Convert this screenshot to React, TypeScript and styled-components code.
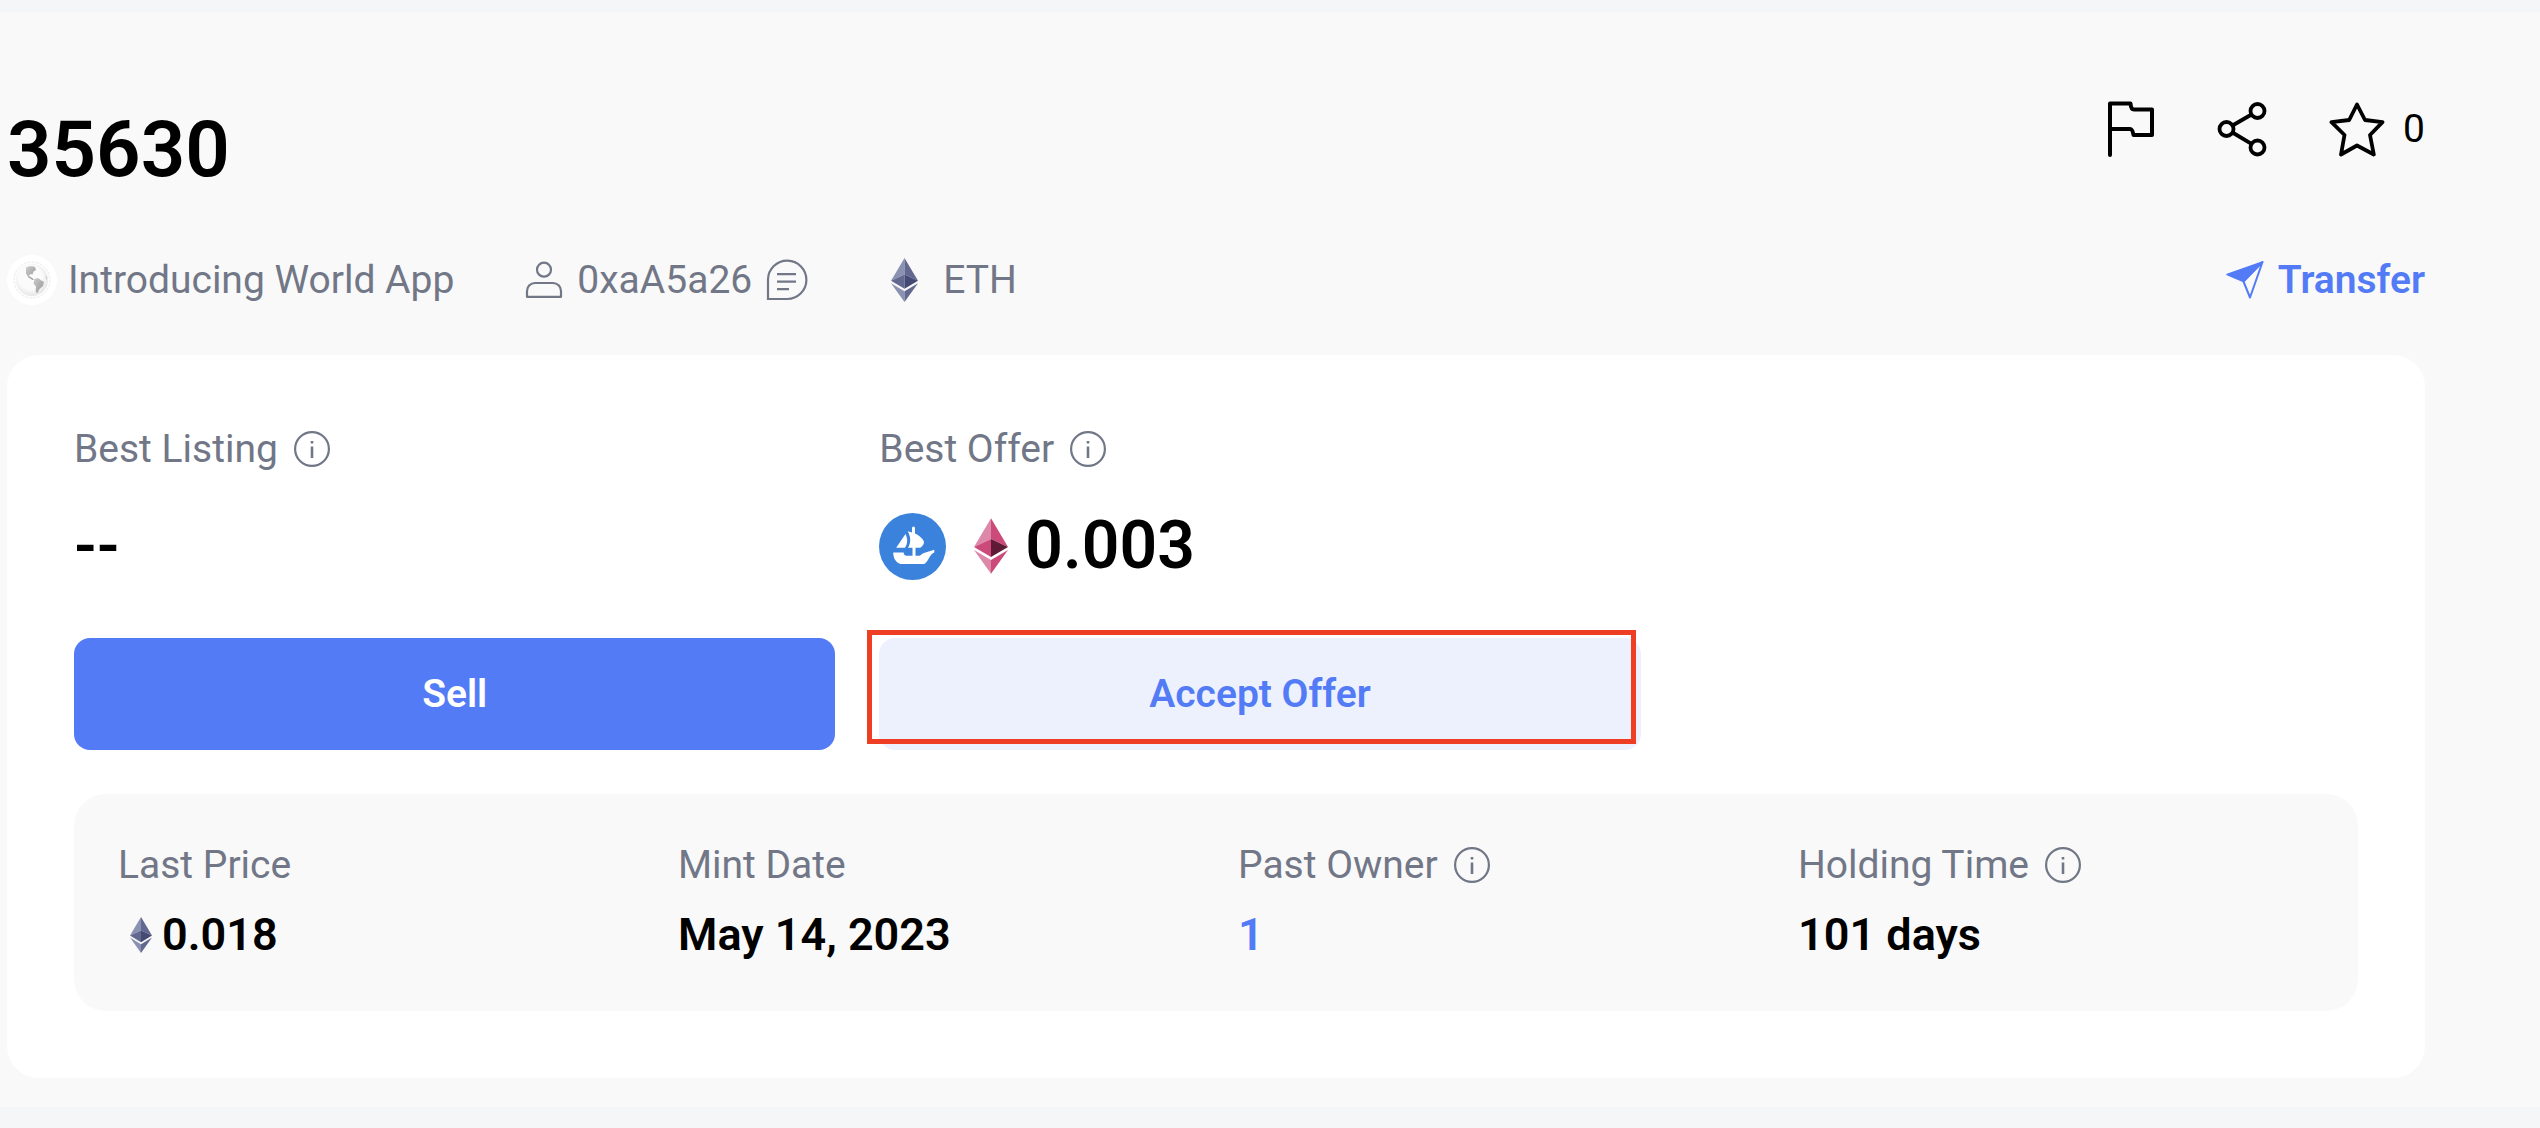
import React from "react";
import styled, { createGlobalStyle } from "styled-components";

const color = {
  ink: "#000000",
  muted: "#717787",
  brand: "#537bf6",
  brandSoft: "#edf1fe",
  surface: "#ffffff",
  page: "#f9f9f9",
  backdrop: "#f4f6f8",
  highlight: "#ee3f24",
};

const GlobalStyle = createGlobalStyle`
  *, *::before, *::after { box-sizing: border-box; }
  body {
    margin: 0;
    background: ${color.backdrop};
    color: ${color.ink};
    font-family: Roboto, "Liberation Sans", sans-serif;
    font-size: 39px;
    line-height: 48px;
  }
  button { font: inherit; color: inherit; background: none; border: 0; padding: 0; cursor: pointer; }
  a { color: inherit; text-decoration: none; }
  svg { display: block; flex: none; }
`;

const Page = styled.main`
  margin-top: 12px;
  padding: 89px 115px 29px 7px;
  background: ${color.page};
`;

const TitleRow = styled.header`
  display: flex;
  justify-content: space-between;
  align-items: flex-start;
`;

const Title = styled.h1`
  margin: 0;
  font-size: 78px;
  line-height: 98px;
  font-weight: 600;
`;

const Actions = styled.div`
  display: flex;
  gap: 62px;
`;

const ActionButton = styled.button`
  display: flex;
  align-items: center;
  gap: 18px;
  height: 56px;
`;

const MetaRow = styled.div`
  display: flex;
  align-items: center;
  margin: 56px 0 50px;
  height: 50px;
  color: ${color.muted};
`;

const MetaItem = styled.a<{ $gap: number }>`
  display: flex;
  align-items: center;
  gap: ${(p) => p.$gap}px;
  margin-right: 71px;
`;

const TransferButton = styled.button`
  display: flex;
  align-items: center;
  gap: 14px;
  margin-left: auto;
  color: ${color.brand};
  font-weight: 600;
`;

const Card = styled.section`
  padding: 70px 67px 67px;
  border-radius: 32px;
  background: ${color.surface};
`;

const Trades = styled.div`
  display: grid;
  grid-template-columns: repeat(2, calc(100% / 3));
  column-gap: 44px;
`;

const Label = styled.div`
  display: flex;
  align-items: center;
  gap: 16px;
  color: ${color.muted};
`;

const TradeValue = styled.div<{ $empty?: boolean }>`
  display: flex;
  align-items: center;
  height: 68px;
  margin: 39px 0 58px;
  font-size: ${(p) => (p.$empty ? 62 : 66)}px;
  line-height: 68px;
  font-weight: 600;
`;

const Marketplace = styled.span`
  display: flex;
  margin-right: 28px;
`;

const CoinAmount = styled.span<{ $gap: number }>`
  display: flex;
  align-items: center;
  gap: ${(p) => p.$gap}px;
`;

const ButtonSlot = styled.div`
  position: relative;
`;

const TradeButton = styled.button<{ $primary?: boolean }>`
  display: block;
  width: 100%;
  height: 112px;
  border-radius: 16px;
  background: ${(p) => (p.$primary ? color.brand : color.brandSoft)};
  color: ${(p) => (p.$primary ? color.surface : color.brand)};
  font-weight: 600;
`;

const Highlight = styled.span`
  position: absolute;
  inset: -8px 5px 6px -12px;
  border: 5px solid ${color.highlight};
  pointer-events: none;
`;

const Stats = styled.dl`
  display: grid;
  grid-template-columns: repeat(4, 1fr);
  margin: 44px 0 0;
  padding: 47px 0 48px 44px;
  border-radius: 32px;
  background: ${color.page};
`;

const StatLabel = styled(Label).attrs({ as: "dt" })``;

const StatValue = styled.dd`
  display: flex;
  margin: 18px 0 0;
  font-size: 45px;
  line-height: 56px;
  font-weight: 600;
`;

const OwnerLink = styled.a`
  color: ${color.brand};
`;

const CoinInset = styled.span`
  display: flex;
  padding-left: 12px;
`;

const ethTones = {
  slate: { light: "#8a92b2", mid: "#62688f", dark: "#454a75" },
  pink: { light: "#dd87a9", mid: "#cb4a79", dark: "#5f1b36" },
};

function EthIcon({ height, tone = "slate" }: { height: number; tone?: "slate" | "pink" }) {
  const t = ethTones[tone];
  return (
    <svg width={Math.round((height * 27) / 44)} height={height} viewBox="0 0 27 44" aria-hidden="true">
      <path d="M13.5 0 0 22.7 13.5 16.4z" fill={t.light} />
      <path d="M13.5 0 27 22.7 13.5 16.4z" fill={t.mid} />
      <path d="M0 22.7 13.5 16.4V30.8z" fill={t.mid} />
      <path d="M27 22.7 13.5 16.4V30.8z" fill={t.dark} />
      <path d="M0 25.2 13.5 33.2V44z" fill={t.light} />
      <path d="M27 25.2 13.5 33.2V44z" fill={t.mid} />
    </svg>
  );
}

function InfoIcon() {
  return (
    <svg width="36" height="36" viewBox="0 0 36 36" fill="none" stroke="currentColor" strokeWidth="2.2" aria-hidden="true">
      <circle cx="18" cy="18" r="16.900" />
      <path d="M18 15.500V27M18 10v2.400" strokeWidth="2.600" />
    </svg>
  );
}

function GlobeIcon() {
  return (
    <svg width="50" height="50" viewBox="0 0 50 50" aria-hidden="true">
      <defs>
        <radialGradient id="globe" cx="45%" cy="42%" r="60%">
          <stop offset="0.6" stopColor="#fbfbfb" />
          <stop offset="1" stopColor="#e4e4e4" />
        </radialGradient>
        <linearGradient id="land" x1="0" y1="0" x2="1" y2="1">
          <stop offset="0" stopColor="#cccccc" />
          <stop offset="1" stopColor="#969696" />
        </linearGradient>
      </defs>
      <circle cx="25" cy="25" r="25" fill="#fff" />
      <circle cx="25" cy="25" r="18" fill="#fdfdfd" stroke="#ececec" strokeWidth="1" strokeDasharray="3 1" />
      <circle cx="25" cy="25" r="16" fill="url(#globe)" />
      <path d="M19 12.500c3-1.500 7-1.500 9-.5l1 3-2.500 1.500-1 3-2.500-.5-1 2 2.500 1.500 2.500 2-1.500.6-4-2.600-2.500-4z" fill="url(#land)" />
      <path d="M27.500 24c3-1.500 5-.5 6 1l3.500 1.700-1 4.300-3.500 3-2 4-1.800-1 .3-5.500-2.500-3z" fill="url(#land)" />
      <path d="M38.500 20l1.500 3-.5 2z" fill="#bbb" />
    </svg>
  );
}

function PersonIcon() {
  return (
    <svg width="38" height="38" viewBox="0 0 38 38" fill="none" stroke="currentColor" strokeWidth="2.200" strokeLinejoin="round" aria-hidden="true">
      <circle cx="19" cy="8.700" r="7" />
      <path d="M2 35.800V30a8 8 0 0 1 8-8h18a8 8 0 0 1 8 8v5.800z" />
    </svg>
  );
}

function ChatIcon() {
  return (
    <svg width="42" height="42" viewBox="0 0 42 42" fill="none" stroke="currentColor" strokeWidth="2.200" aria-hidden="true">
      <path d="M2 40V20.500A19.200 19.200 0 1 1 21 40z" />
      <path d="M11 15.200h19M11 22.700h19M11 30.200h12" />
    </svg>
  );
}

function FlagIcon() {
  return (
    <svg width="48" height="56" viewBox="0 0 48 56" fill="none" stroke="currentColor" strokeWidth="4" strokeLinejoin="round" strokeLinecap="round" aria-hidden="true">
      <path d="M3 54V2.500h20.500q.5 6 3.500 6h18V34H26.500q-1-6-3.500-6H3" />
    </svg>
  );
}

function ShareIcon() {
  return (
    <svg width="50" height="56" viewBox="0 0 50 56" fill="none" stroke="currentColor" strokeWidth="3.800" aria-hidden="true">
      <circle cx="9.500" cy="28" r="7" />
      <circle cx="40.500" cy="10" r="7" />
      <circle cx="40.500" cy="46.500" r="7" />
      <path d="M15.500 24.500 34.500 13.500M15.500 31.500 34.500 42.800" />
    </svg>
  );
}

function StarIcon() {
  return (
    <svg width="56" height="56" viewBox="0 0 56 56" fill="none" stroke="currentColor" strokeWidth="3.800" strokeLinejoin="round" aria-hidden="true">
      <path d="M28 3.500 36 19 53.500 21.200 41 34 44.800 53.500 28 44.500 12 53.500 15.500 34 2.500 21.200 20.200 19z" />
    </svg>
  );
}

function PlaneIcon() {
  return (
    <svg width="38" height="38" viewBox="0 0 38 38" aria-hidden="true">
      <path d="M1 13.500 36.500 1 17.500 20.500z" fill="currentColor" stroke="currentColor" strokeWidth="1.500" strokeLinejoin="round" />
      <path d="M17.500 20.500 24 36.500 36.500 1z" fill="none" stroke="currentColor" strokeWidth="2" strokeLinejoin="round" />
    </svg>
  );
}

function OpenSeaIcon() {
  return (
    <svg width="67" height="67" viewBox="0 0 67 67" aria-hidden="true">
      <circle cx="33.500" cy="33.500" r="33.500" fill="#3b82dc" />
      <g fill="#fff">
        <path d="M26.500 21c2.300 5 2.300 9.500-.5 13.700H17.200z" />
        <path d="M28.800 18.300 33 19.500V15a1.500 1.500 0 0 1 3 0v5.500c5.500 2.700 9.500 6.500 8.900 9.500-.3 1.700-1.700 3.600-3.700 4.700h-4.700v8h4.200l3.500-2.500 11.100-3.500v2.800c-4.300 1.700-5 6.500-8.300 10.100-.8 1-1.800 1.500-3 1.500H23.500c-5.500 0-9.300-5-9.300-11.700h10.500c0 2.200 1.300 3.300 3 3.300h5.800v-8H29c3-4.500 3-10.500-.2-16.400z" />
      </g>
    </svg>
  );
}

export default function App() {
  return (
    <>
      <GlobalStyle />
      <Page>
        <TitleRow>
          <Title>35630</Title>
          <Actions>
            <ActionButton type="button" aria-label="Report"><FlagIcon /></ActionButton>
            <ActionButton type="button" aria-label="Share"><ShareIcon /></ActionButton>
            <ActionButton type="button" aria-label="Favorite"><StarIcon />0</ActionButton>
          </Actions>
        </TitleRow>

        <MetaRow>
          <MetaItem href="#collection" $gap={11}><GlobeIcon />Introducing World App</MetaItem>
          <MetaItem href="#owner" $gap={14}><PersonIcon />0xaA5a26<ChatIcon /></MetaItem>
          <MetaItem href="#chain" $gap={25}><CoinInset><EthIcon height={44} /></CoinInset>ETH</MetaItem>
          <TransferButton type="button"><PlaneIcon />Transfer</TransferButton>
        </MetaRow>

        <Card>
          <Trades>
            <div>
              <Label>Best Listing<InfoIcon /></Label>
              <TradeValue $empty>--</TradeValue>
              <TradeButton type="button" $primary>Sell</TradeButton>
            </div>
            <div>
              <Label>Best Offer<InfoIcon /></Label>
              <TradeValue>
                <Marketplace><OpenSeaIcon /></Marketplace>
                <CoinAmount $gap={17}><EthIcon height={56} tone="pink" />0.003</CoinAmount>
              </TradeValue>
              <ButtonSlot>
                <TradeButton type="button">Accept Offer</TradeButton>
                <Highlight />
              </ButtonSlot>
            </div>
          </Trades>

          <Stats>
            <div>
              <StatLabel>Last Price</StatLabel>
              <StatValue>
                <CoinInset><CoinAmount $gap={10}><EthIcon height={36} />0.018</CoinAmount></CoinInset>
              </StatValue>
            </div>
            <div>
              <StatLabel>Mint Date</StatLabel>
              <StatValue>May 14, 2023</StatValue>
            </div>
            <div>
              <StatLabel>Past Owner<InfoIcon /></StatLabel>
              <StatValue><OwnerLink href="#owners">1</OwnerLink></StatValue>
            </div>
            <div>
              <StatLabel>Holding Time<InfoIcon /></StatLabel>
              <StatValue>101 days</StatValue>
            </div>
          </Stats>
        </Card>
      </Page>
    </>
  );
}
